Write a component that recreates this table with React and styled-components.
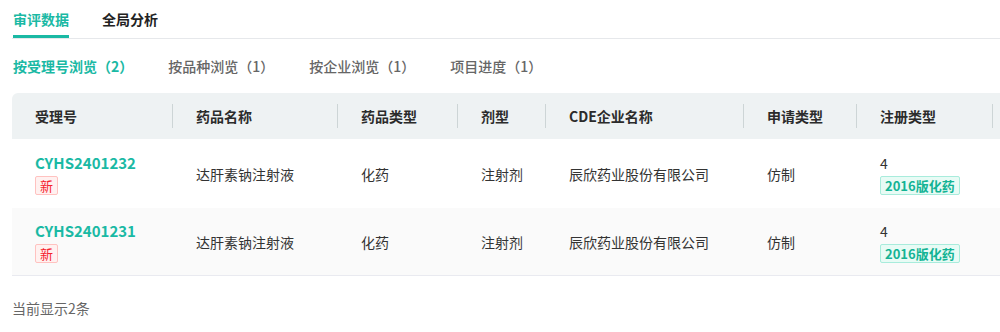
import styled, { createGlobalStyle } from "styled-components";

const GlobalStyle = createGlobalStyle`
  body {
    margin: 0;
    background: #fff;
    font-family: "Noto Sans CJK SC", "Noto Sans", sans-serif;
    color: #333;
  }
`;

const TEAL = "#1ab9a4";

const columns = [
    { title: "受理号", width: 161 },
    { title: "药品名称", width: 165 },
    { title: "药品类型", width: 120 },
    { title: "剂型", width: 88 },
    { title: "CDE企业名称", width: 198 },
    { title: "申请类型", width: 113 },
    { title: "注册类型", width: 136 },
    { title: "", width: 40 },
];

const rows = [
    { id: "CYHS2401232", name: "达肝素钠注射液", type: "化药", form: "注射剂", company: "辰欣药业股份有限公司", apply: "仿制", reg: "4" },
    { id: "CYHS2401231", name: "达肝素钠注射液", type: "化药", form: "注射剂", company: "辰欣药业股份有限公司", apply: "仿制", reg: "4" },
];

const subTabs = ["按受理号浏览（2）", "按品种浏览（1）", "按企业浏览（1）", "项目进度（1）"];

function App() {
    const grid = columns.map((c) => c.width + "px").join(" ");
    return (
        <Page>
            <GlobalStyle />
            <TopTabs>
                <TopTab $active>审评数据</TopTab>
                <TopTab>全局分析</TopTab>
            </TopTabs>
            <SubTabs>
                {subTabs.map((t, i) => (
                    <SubTab key={t} $active={i === 0}>{t}</SubTab>
                ))}
            </SubTabs>
            <TableWrap>
                <Table>
                    <HeaderRow $grid={grid}>
                        {columns.map((c, i) => (
                            <HeadCell key={i}>{c.title}</HeadCell>
                        ))}
                    </HeaderRow>
                    {rows.map((r, i) => (
                        <Row key={r.id} $grid={grid} $striped={i % 2 === 1}>
                            <Cell>
                                <Stack>
                                    <IdLink>{r.id}</IdLink>
                                    <Tag $kind="new">新</Tag>
                                </Stack>
                            </Cell>
                            <Cell>{r.name}</Cell>
                            <Cell>{r.type}</Cell>
                            <Cell>{r.form}</Cell>
                            <Cell>{r.company}</Cell>
                            <Cell>{r.apply}</Cell>
                            <Cell>
                                <Stack>
                                    <span>{r.reg}</span>
                                    <Tag $kind="drug">2016版化药</Tag>
                                </Stack>
                            </Cell>
                            <Cell />
                        </Row>
                    ))}
                </Table>
            </TableWrap>
            <Footer>当前显示2条</Footer>
        </Page>
    );
}

export default App;

const Page = styled.div`
    width: 1000px;
    overflow: hidden;
    padding-left: 12px;
    box-sizing: border-box;
`;

const TopTabs = styled.div`
    display: flex;
    gap: 33px;
    height: 38px;
    border-bottom: 1px solid #e6e8eb;
    padding-left: 1px;
`;

const TopTab = styled.div`
    display: flex;
    align-items: center;
    height: 100%;
    box-sizing: border-box;
    font-size: 14px;
    font-weight: 700;
    color: ${(p) => (p.$active ? TEAL : "#222")};
    border-bottom: 3px solid ${(p) => (p.$active ? TEAL : "transparent")};
    padding-top: 3px;
`;

const SubTabs = styled.div`
    display: flex;
    gap: 35px;
    height: 54px;
    align-items: center;
    padding-left: 1px;
`;

const SubTab = styled.div`
    font-size: 14px;
    font-weight: ${(p) => (p.$active ? 700 : 500)};
    color: ${(p) => (p.$active ? TEAL : "#666")};
`;

const TableWrap = styled.div`
    overflow: hidden;
`;

const Table = styled.div`
    width: max-content;
    border-bottom: 1px solid #e9eaf0;
`;

const HeaderRow = styled.div`
    display: grid;
    grid-template-columns: ${(p) => p.$grid};
    height: 46px;
    background: #eef2f3;
    border-radius: 6px 6px 0 0;
`;

const HeadCell = styled.div`
    position: relative;
    display: flex;
    align-items: center;
    padding: 0 23px;
    font-size: 14px;
    font-weight: 700;
    color: #2b2b2b;

    &::after {
        content: "";
        position: absolute;
        right: 0;
        top: 11px;
        height: 24px;
        width: 1px;
        background: #cdd5d6;
    }
`;

const Row = styled.div`
    display: grid;
    grid-template-columns: ${(p) => p.$grid};
    height: ${(p) => (p.$striped ? 67 : 69)}px;
    background: ${(p) => (p.$striped ? "#fafafa" : "#fff")};
`;

const Cell = styled.div`
    display: flex;
    align-items: center;
    padding: 0 23px;
    font-size: 14px;
    color: #333;
`;

const Stack = styled.div`
    display: flex;
    flex-direction: column;
    align-items: flex-start;
    gap: 3px;
    line-height: 20px;
`;

const IdLink = styled.span`
    color: ${TEAL};
    font-weight: 700;
    font-size: 15px;
`;

const Tag = styled.span`
    display: inline-block;
    font-size: 13px;
    line-height: 17px;
    padding: 0 4px;
    border-radius: 2px;
    font-weight: ${(p) => (p.$kind === "drug" ? 700 : 400)};
    color: ${(p) => (p.$kind === "drug" ? "#13b394" : "#f5222d")};
    background: ${(p) => (p.$kind === "drug" ? "#e8fbf5" : "#fff1f0")};
    border: 1px solid ${(p) => (p.$kind === "drug" ? "#a8ecdc" : "#ffc2c0")};
`;

const Footer = styled.div`
    padding-top: 22px;
    font-size: 14px;
    color: #666;
`;
